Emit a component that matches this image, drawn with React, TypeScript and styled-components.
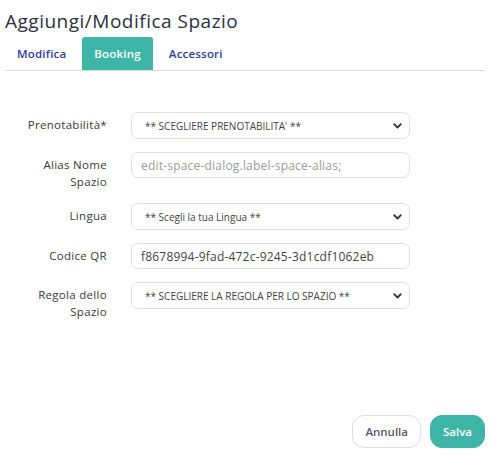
import { createGlobalStyle } from "styled-components";
import styled from "styled-components";

const GlobalStyle = createGlobalStyle`
  html, body {
    margin: 0;
    padding: 0;
    background: #ffffff;
  }
  body {
    font-family: "Open Sans", "Noto Sans", sans-serif;
  }
`;

const Dialog = styled.div`
  width: 491px;
  height: 455px;
  box-sizing: border-box;
  padding: 8px 6px 7px 5px;
  display: flex;
  flex-direction: column;
`;

const Title = styled.h2`
  margin: 0;
  font-size: 19px;
  font-weight: 500;
  line-height: 26px;
  color: #2d3142;
  letter-spacing: 0.5px;
`;

const TabBar = styled.div`
  margin-top: 3px;
  display: flex;
  gap: 4px;
  border-bottom: 1px solid #dcdcdc;
`;

const Tab = styled.div<{ $active?: boolean }>`
  height: 33px;
  padding: 0 12px;
  display: flex;
  align-items: center;
  font-size: 11.5px;
  font-weight: 600;
  letter-spacing: 0.2px;
  border-radius: 3px 3px 0 0;
  color: ${(p) => (p.$active ? "#ffffff" : "#2f3da0")};
  background: ${(p) => (p.$active ? "#3fb5a7" : "transparent")};
`;

const Form = styled.div`
  margin-top: 41px;
  display: flex;
  flex-direction: column;
  gap: 13px;
`;

const Row = styled.div`
  display: grid;
  grid-template-columns: 102px 279px;
  column-gap: 24px;
  align-items: start;
`;

const Label = styled.label`
  text-align: right;
  font-size: 11.5px;
  letter-spacing: 0.3px;
  line-height: 17px;
  padding: 4px 0 0 20px;
  color: #3a3a3a;
`;

const Field = styled.div<{ $select?: boolean }>`
  height: ${(p) => (p.$select ? 27 : 26)}px;
  box-sizing: border-box;
  border: 1px solid #dde1e6;
  border-radius: 7px;
  display: flex;
  align-items: center;
  padding: ${(p) => (p.$select ? "0 7px 0 13px" : "0 9px")};
  font-size: ${(p) => (p.$select ? 10 : 12)}px;
  letter-spacing: ${(p) => (p.$select ? 0 : 0.2)}px;
  color: #444;
`;

const Placeholder = styled.span`
  color: #9b9b9b;
`;

const FieldText = styled.span`
  flex: 1;
  white-space: nowrap;
  overflow: hidden;
`;

const Footer = styled.div`
  margin-top: auto;
  display: flex;
  justify-content: flex-end;
  gap: 9px;
`;

const Button = styled.button<{ $primary?: boolean }>`
  height: 33px;
  padding: 0 12px;
  border-radius: 12px;
  font-family: inherit;
  font-size: 11.5px;
  font-weight: 600;
  border: 1px solid ${(p) => (p.$primary ? "#3fb5a7" : "#d9dee5")};
  background: ${(p) => (p.$primary ? "#3fb5a7" : "#ffffff")};
  color: ${(p) => (p.$primary ? "#ffffff" : "#555a60")};
`;

function Chevron() {
  return (
    <svg width="9" height="6" viewBox="0 0 9 6">
      <path d="M1.2 1.2 L4.5 4.5 L7.8 1.2" fill="none" stroke="#333" strokeWidth="1.8" strokeLinecap="round" strokeLinejoin="round" />
    </svg>
  );
}

const rows = [
  { label: "Prenotabilità*", value: "** SCEGLIERE PRENOTABILITA' **", select: true },
  { label: "Alias Nome Spazio", value: "edit-space-dialog.label-space-alias;", placeholder: true },
  { label: "Lingua", value: "** Scegli la tua Lingua **", select: true },
  { label: "Codice QR", value: "f8678994-9fad-472c-9245-3d1cdf1062eb" },
  { label: "Regola dello Spazio", value: "** SCEGLIERE LA REGOLA PER LO SPAZIO **", select: true },
];

export default function App() {
  return (
    <>
      <GlobalStyle />
      <Dialog>
        <Title>Aggiungi/Modifica Spazio</Title>
        <TabBar>
          <Tab>Modifica</Tab>
          <Tab $active>Booking</Tab>
          <Tab>Accessori</Tab>
        </TabBar>
        <Form>
          {rows.map((r) => (
            <Row key={r.label}>
              <Label>{r.label}</Label>
              <Field $select={r.select}>
                <FieldText>{r.placeholder ? <Placeholder>{r.value}</Placeholder> : r.value}</FieldText>
                {r.select && <Chevron />}
              </Field>
            </Row>
          ))}
        </Form>
        <Footer>
          <Button>Annulla</Button>
          <Button $primary>Salva</Button>
        </Footer>
      </Dialog>
    </>
  );
}
